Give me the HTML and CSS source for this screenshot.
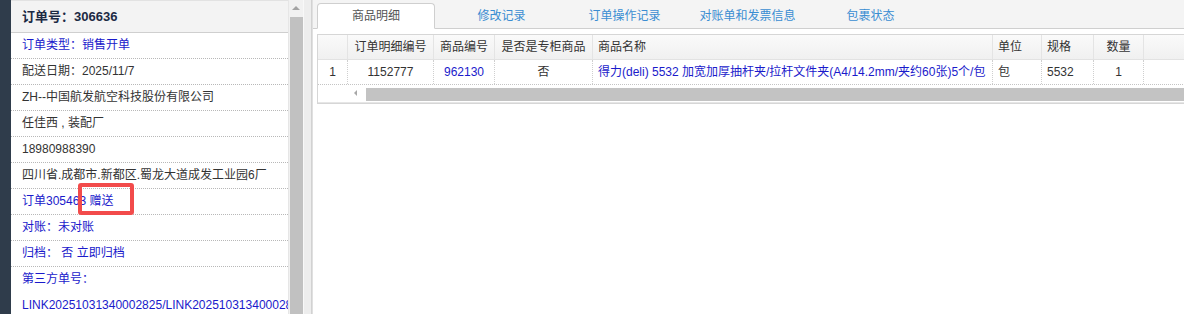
FILE: index.html
```html
<!DOCTYPE html>
<html lang="zh-CN">
<head>
<meta charset="utf-8">
<link rel="stylesheet" href="styles.css">
</head>
<body>
<div class="page">
  <div class="strip"></div>
  <div class="left">
    <div class="lhead">订单号：306636</div>
    <div class="lrow blue">订单类型：销售开单</div>
    <div class="lrow">配送日期：2025/11/7</div>
    <div class="lrow">ZH--中国航发航空科技股份有限公司</div>
    <div class="lrow">任佳西 , 装配厂</div>
    <div class="lrow">18980988390</div>
    <div class="lrow">四川省.成都市.新都区.蜀龙大道成发工业园6厂</div>
    <div class="lrow blue">订单30546<span class="mark"></span>3 赠送</div>
    <div class="lrow blue">对账：未对账</div>
    <div class="lrow blue">归档：&nbsp;否 立即归档</div>
    <div class="lrow blue nob">第三方单号：</div>
    <div class="lrow blue nob clip">LINK20251031340002825/LINK20251031340002825</div>
  </div>
  <div class="vscroll"><div class="uparrow"></div><div class="vthumb"></div></div>
  <div class="gap"></div>
  <div class="right">
    <div class="tabs">
      <div class="tab active">商品明细</div>
      <div class="tab">修改记录</div>
      <div class="tab">订单操作记录</div>
      <div class="tab">对账单和发票信息</div>
      <div class="tab">包裹状态</div>
    </div>
    <div class="grid">
      <div class="row head">
        <div class="c c0"></div>
        <div class="c c1 ctr">订单明细编号</div>
        <div class="c c2 ctr">商品编号</div>
        <div class="c c3 ctr">是否是专柜商品</div>
        <div class="c c4">商品名称</div>
        <div class="c c5">单位</div>
        <div class="c c6">规格</div>
        <div class="c c7 ctr">数量</div>
        <div class="c c8"></div>
      </div>
      <div class="row body">
        <div class="c c0 ctr">1</div>
        <div class="c c1 ctr">1152777</div>
        <div class="c c2 ctr blue">962130</div>
        <div class="c c3 ctr">否</div>
        <div class="c c4 blue">得力(deli) 5532 加宽加厚抽杆夹/拉杆文件夹(A4/14.2mm/夹约60张)5个/包</div>
        <div class="c c5">包</div>
        <div class="c c6">5532</div>
        <div class="c c7 ctr">1</div>
        <div class="c c8"></div>
      </div>
      <div class="hscroll"><div class="larrow"></div><div class="hthumb"></div></div>
    </div>
  </div>
</div>
</body>
</html>
```
FILE: styles.css
```css
* { box-sizing: border-box; }
html, body { margin: 0; padding: 0; }
body {
  width: 1184px; height: 314px; overflow: hidden;
  font-family: "Liberation Sans", Arial, "Noto Sans CJK SC", sans-serif;
  font-size: 12px; color: #333; background: #fff;
}
.page { display: flex; height: 314px; }
.strip { width: 11px; background: #2f3c4b; flex: none; }
.left { width: 277px; flex: none; background: #fff; border-top: 1px solid #e2e2e2; }
.lhead {
  height: 32px; line-height: 31px; padding-left: 11px;
  background: #f3f3f3; border-bottom: 1px solid #cfcfcf;
  font-weight: bold; font-size: 13px; color: #1c2a44;
}
.lrow {
  height: 26px; line-height: 25px; padding-left: 11px;
  border-bottom: 1px dotted #b8b8b8; white-space: nowrap; position: relative;
}
.lrow.nob { border-bottom: none; }
.clip { overflow: hidden; }
.blue { color: #1a1acb; }
.mark {
  position: absolute; left: 67px; top: -6px; width: 56px; height: 32px;
  border: 4px solid #f24b4b; border-radius: 3px;
}
.vscroll { width: 15px; flex: none; background: #f1f1f1; position: relative; border-left: 1px solid #e6e6e6; }
.uparrow {
  position: absolute; left: 3px; top: 6px; width: 0; height: 0;
  border-left: 4px solid transparent; border-right: 4px solid transparent; border-bottom: 4px solid #a3a3a3;
}
.vthumb { position: absolute; left: 1px; right: 0; top: 17px; bottom: 0; background: #c1c1c1; }
.gap { width: 9px; flex: none; background: #ededed; border-right: 1px solid #d2d2d2; border-left: 1px solid #f8f8f8; }
.right { flex: 1; min-width: 0; overflow: hidden; background: #fff; border-left: 1px solid #e0e0e0; }
.tabs {
  height: 29px; display: flex; align-items: flex-end; padding-left: 4px;
  background: #f4f4f4; border-bottom: 1px solid #cfcfcf;
}
.tab {
  width: 123px; height: 25px; line-height: 24px; text-align: center;
  color: #3a8dd2; font-size: 12px; flex: none; margin-bottom: -1px;
}
.tab.active {
  width: 118px; margin-right: 5px; background: #fff; color: #555;
  border: 1px solid #cfcfcf; border-bottom-color: #fff; border-radius: 4px 4px 0 0; height: 26px;
}
.grid { margin: 5px 0 0 4px; border: 1px solid #d6d6d6; border-right: none; width: 900px; }
.row { display: flex; }
.row.head { height: 25px; background: linear-gradient(#fafafa, #f0f0f0); border-bottom: 1px solid #e2e2e2; }
.row.body { height: 25px; border-bottom: 1px dotted #c4c4c4; }
.c {
  flex: none; padding: 0 5px; line-height: 24px; white-space: nowrap; overflow: hidden;
  border-right: 1px dotted #cfcfcf;
}
.head .c { border-right: 1px solid #e4e4e4; }
.ctr { text-align: center; }
.c0 { width: 30px; }
.c1 { width: 86px; }
.c2 { width: 61px; }
.c3 { width: 98px; }
.c4 { width: 400px; }
.c5 { width: 49px; }
.c6 { width: 52px; }
.c7 { width: 50px; }
.c8 { width: 60px; border-right: none; }
.head .c8 { border-right: none; }
.hscroll { height: 18px; position: relative; background: #fff; border-bottom: 1px solid #e6e6e6; }
.larrow {
  position: absolute; left: 36px; top: 5px; width: 0; height: 0;
  border-top: 3px solid transparent; border-bottom: 3px solid transparent; border-right: 3px solid #a8a8a8;
}
.hthumb { position: absolute; left: 48px; right: 0; top: 3px; height: 13px; background: #c3c3c3; }
```
